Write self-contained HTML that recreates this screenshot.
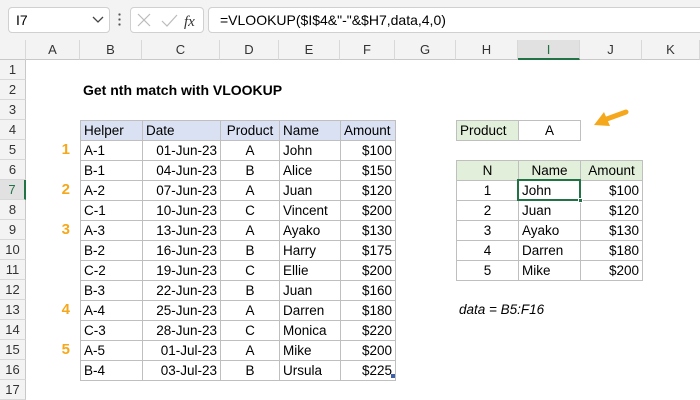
<!DOCTYPE html>
<html><head><meta charset="utf-8"><style>
*{box-sizing:border-box;margin:0;padding:0}
body{width:700px;height:400px;background:#fff;position:relative;overflow:hidden;font-family:"Liberation Sans",sans-serif;font-size:13.5px;color:#000}
.top{position:absolute;left:0;top:0;width:700px;height:40px;background:#f3f3f3}
.box{position:absolute;background:#fff;border:1px solid #d0d0d0;border-radius:4px}
.ch{position:absolute;top:40px;height:20px;background:#f3f3f3;border-right:1px solid #d8d8d8;border-bottom:1px solid #c8c8c8;text-align:center;line-height:19px;color:#333;font-size:13px}
.rh{position:absolute;left:0;width:26px;height:20px;background:#f3f3f3;border-bottom:1px solid #d8d8d8;border-right:1px solid #c8c8c8;text-align:center;line-height:20px;color:#333;font-size:13px}
table{position:absolute;border-collapse:collapse;table-layout:fixed}
td{border:1px solid #bfbfbf;height:20px;padding:0 3px;white-space:nowrap;overflow:hidden;line-height:18px}
.r{text-align:right}.c{text-align:center}
.hb td{background:#d9e1f2}
.hg{background:#e2efda}
.num{position:absolute;left:50px;width:20px;text-align:right;color:#f5a81c;font-weight:bold;font-size:15px;line-height:20px}
</style></head><body>
<div class="top"></div>
<div class="box" style="left:8px;top:7px;width:102px;height:26px"></div>
<div style="position:absolute;left:16px;top:12px;font-size:14px">I7</div>
<svg style="position:absolute;left:92px;top:16px" width="12" height="8"><path d="M1 1 L6 6 L11 1" stroke="#444" stroke-width="1.3" fill="none"/></svg>
<div style="position:absolute;left:118px;top:12px;width:3px;height:16px;background:radial-gradient(circle,#555 1px,transparent 1.3px) 0 0/3px 5px"></div>
<div class="box" style="left:130px;top:7px;width:74px;height:26px"></div>
<svg style="position:absolute;left:136px;top:12px" width="66" height="18"><path d="M2 2 L14 14 M14 2 L2 14" stroke="#bbb" stroke-width="1.2"/><path d="M160 0" /><path d="M26 9 L31 14 L41 3" stroke="#bbb" stroke-width="1.2" fill="none"/><text x="48" y="14" font-family="Liberation Serif" font-style="italic" font-size="15" fill="#333">fx</text></svg>
<div class="box" style="left:208px;top:7px;width:500px;height:26px"></div>
<div style="position:absolute;left:220px;top:12px;font-size:14px">=VLOOKUP($I$4&amp;"-"&amp;$H7,data,4,0)</div>
<div class="ch" style="left:0;width:26px;background:#f3f3f3"></div>
<div class="ch" style="left:26px;width:54px">A</div><div class="ch" style="left:80px;width:62px">B</div><div class="ch" style="left:142px;width:78px">C</div><div class="ch" style="left:220px;width:59px">D</div><div class="ch" style="left:279px;width:61px">E</div><div class="ch" style="left:340px;width:55px">F</div><div class="ch" style="left:395px;width:61px">G</div><div class="ch" style="left:456px;width:62px">H</div><div class="ch" style="left:518px;width:62px;background:#e1e1e1;border-bottom:2px solid #217346;color:#217346">I</div><div class="ch" style="left:580px;width:62px">J</div><div class="ch" style="left:642px;width:58px">K</div>
<div class="rh" style="top:60px">1</div><div class="rh" style="top:80px">2</div><div class="rh" style="top:100px">3</div><div class="rh" style="top:120px">4</div><div class="rh" style="top:140px">5</div><div class="rh" style="top:160px">6</div><div class="rh" style="top:180px;background:#e1e1e1;border-right:2px solid #217346;color:#217346">7</div><div class="rh" style="top:200px">8</div><div class="rh" style="top:220px">9</div><div class="rh" style="top:240px">10</div><div class="rh" style="top:260px">11</div><div class="rh" style="top:280px">12</div><div class="rh" style="top:300px">13</div><div class="rh" style="top:320px">14</div><div class="rh" style="top:340px">15</div><div class="rh" style="top:360px">16</div><div class="rh" style="top:380px">17</div>
<div style="position:absolute;left:83px;top:80px;line-height:20px;font-weight:bold;font-size:14px">Get nth match with VLOOKUP</div>
<div class="num" style="top:140px">1</div><div class="num" style="top:180px">2</div><div class="num" style="top:220px">3</div><div class="num" style="top:300px">4</div><div class="num" style="top:340px">5</div>
<table style="left:80px;top:120px;width:315px">
<colgroup><col style="width:62px"><col style="width:78px"><col style="width:59px"><col style="width:61px"><col style="width:55px"></colgroup>
<tr class="hb"><td>Helper</td><td>Date</td><td class="c">Product</td><td>Name</td><td>Amount</td></tr>
<tr><td>A-1</td><td class="r">01-Jun-23</td><td class="c">A</td><td>John</td><td class="r">$100</td></tr>
<tr><td>B-1</td><td class="r">04-Jun-23</td><td class="c">B</td><td>Alice</td><td class="r">$150</td></tr>
<tr><td>A-2</td><td class="r">07-Jun-23</td><td class="c">A</td><td>Juan</td><td class="r">$120</td></tr>
<tr><td>C-1</td><td class="r">10-Jun-23</td><td class="c">C</td><td>Vincent</td><td class="r">$200</td></tr>
<tr><td>A-3</td><td class="r">13-Jun-23</td><td class="c">A</td><td>Ayako</td><td class="r">$130</td></tr>
<tr><td>B-2</td><td class="r">16-Jun-23</td><td class="c">B</td><td>Harry</td><td class="r">$175</td></tr>
<tr><td>C-2</td><td class="r">19-Jun-23</td><td class="c">C</td><td>Ellie</td><td class="r">$200</td></tr>
<tr><td>B-3</td><td class="r">22-Jun-23</td><td class="c">B</td><td>Juan</td><td class="r">$160</td></tr>
<tr><td>A-4</td><td class="r">25-Jun-23</td><td class="c">A</td><td>Darren</td><td class="r">$180</td></tr>
<tr><td>C-3</td><td class="r">28-Jun-23</td><td class="c">C</td><td>Monica</td><td class="r">$220</td></tr>
<tr><td>A-5</td><td class="r">01-Jul-23</td><td class="c">A</td><td>Mike</td><td class="r">$200</td></tr>
<tr><td>B-4</td><td class="r">03-Jul-23</td><td class="c">B</td><td>Ursula</td><td class="r">$225</td></tr>
</table>
<div style="position:absolute;left:391px;top:374px;width:4px;height:4px;background:#3d5fa8"></div>
<table style="left:456px;top:120px;width:124px">
<colgroup><col style="width:62px"><col style="width:62px"></colgroup>
<tr><td class="hg">Product</td><td class="c">A</td></tr></table>
<table style="left:456px;top:160px;width:186px">
<colgroup><col style="width:62px"><col style="width:62px"><col style="width:62px"></colgroup>
<tr class="hg"><td class="c">N</td><td class="c">Name</td><td class="c">Amount</td></tr>
<tr><td class="c">1</td><td>John</td><td class="r">$100</td></tr>
<tr><td class="c">2</td><td>Juan</td><td class="r">$120</td></tr>
<tr><td class="c">3</td><td>Ayako</td><td class="r">$130</td></tr>
<tr><td class="c">4</td><td>Darren</td><td class="r">$180</td></tr>
<tr><td class="c">5</td><td>Mike</td><td class="r">$200</td></tr>
</table>
<div style="position:absolute;left:517px;top:179px;width:64px;height:22px;border:2px solid #217346"></div>
<div style="position:absolute;left:578px;top:198px;width:5px;height:5px;background:#217346;border:1px solid #fff"></div>
<div style="position:absolute;left:459px;top:300px;line-height:20px;font-style:italic">data = B5:F16</div>
<svg style="position:absolute;left:590px;top:106px" width="42" height="24"><path d="M36 6 L14 14" stroke="#f5a81c" stroke-width="5" stroke-linecap="round"/><path d="M4 19 L14 6 L20 20 Z" fill="#f5a81c"/></svg>
</body></html>
